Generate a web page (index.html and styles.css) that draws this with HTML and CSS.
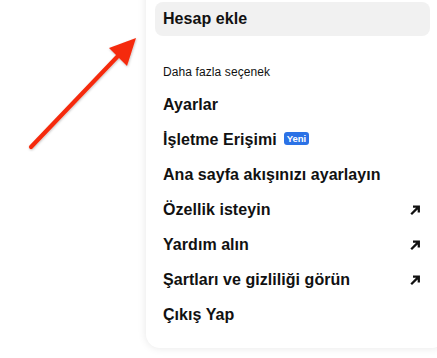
FILE: index.html
```html
<!DOCTYPE html>
<html lang="tr">
<head>
<meta charset="utf-8">
<link rel="stylesheet" href="styles.css">
</head>
<body>
<div class="page">
  <div class="menu">
    <div class="item item-active">Hesap ekle</div>
    <div class="section-title">Daha fazla seçenek</div>
    <div class="item">Ayarlar</div>
    <div class="item"><span>İşletme Erişimi</span><span class="badge">Yeni</span></div>
    <div class="item">Ana sayfa akışınızı ayarlayın</div>
    <div class="item"><span class="grow">Özellik isteyin</span><svg class="ext" viewBox="0 0 12 12"><path d="M2.2 10.3 L9.6 2.9 M4 2.6 H9.8 V8.4"/></svg></div>
    <div class="item"><span class="grow">Yardım alın</span><svg class="ext" viewBox="0 0 12 12"><path d="M2.2 10.3 L9.6 2.9 M4 2.6 H9.8 V8.4"/></svg></div>
    <div class="item"><span class="grow">Şartları ve gizliliği görün</span><svg class="ext" viewBox="0 0 12 12"><path d="M2.2 10.3 L9.6 2.9 M4 2.6 H9.8 V8.4"/></svg></div>
    <div class="item">Çıkış Yap</div>
  </div>
  <svg class="annot" viewBox="0 0 150 160" width="150" height="160">
    <defs>
      <filter id="sh" x="-20%" y="-20%" width="140%" height="140%">
        <feDropShadow dx="0.5" dy="1" stdDeviation="1" flood-color="#000" flood-opacity="0.25"/>
      </filter>
    </defs>
    <g filter="url(#sh)">
      <line x1="31" y1="147" x2="118" y2="56" stroke="#f52c0e" stroke-width="4.2" stroke-linecap="round"/>
      <polygon points="136,38 109,48 127,66" fill="#f52c0e"/>
    </g>
  </svg>
</div>
</body>
</html>
```
FILE: styles.css
```css
html, body {
  margin: 0;
  padding: 0;
  background: #ffffff;
}
body {
  width: 437px;
  height: 358px;
  overflow: hidden;
  font-family: "Liberation Sans", Arial, sans-serif;
  color: #111111;
}
.page {
  position: relative;
  display: flex;
  justify-content: flex-start;
  padding-left: 146px;
  height: 358px;
}
.menu {
  width: 300px;
  flex-shrink: 0;
  margin-top: -20px;
  align-self: flex-start;
  padding: 22px 0 16px 9px;
  box-sizing: border-box;
  background: #ffffff;
  border-radius: 14px;
  box-shadow: 0 0 8px rgba(0, 0, 0, 0.1);
  display: flex;
  flex-direction: column;
}
.item {
  width: 275px;
  box-sizing: border-box;
  height: 35px;
  padding: 0 8px;
  display: flex;
  align-items: center;
  font-size: 16px;
  font-weight: bold;
  letter-spacing: 0.05px;
}
.item-active {
  height: 34px;
  background: #f1f1f1;
  border-radius: 8px;
}
.section-title {
  margin-top: 28px;
  margin-bottom: 7px;
  height: 16px;
  line-height: 16px;
  padding-left: 8px;
  font-size: 12px;
  letter-spacing: 0.1px;
}
.grow {
  flex: 1;
}
.badge {
  margin-left: 7px;
  background: #2b72e6;
  color: #ffffff;
  font-size: 9.5px;
  font-weight: bold;
  line-height: 13px;
  padding: 0 3px;
  border-radius: 3px;
  margin-top: -2px;
  letter-spacing: 0;
}
.ext {
  width: 12px;
  height: 12px;
  fill: none;
  stroke: #111111;
  stroke-width: 2.3;
  stroke-linecap: butt;
  stroke-linejoin: miter;
  margin-right: 1px;
}
.annot {
  position: absolute;
  left: 0;
  top: 0;
}
```
